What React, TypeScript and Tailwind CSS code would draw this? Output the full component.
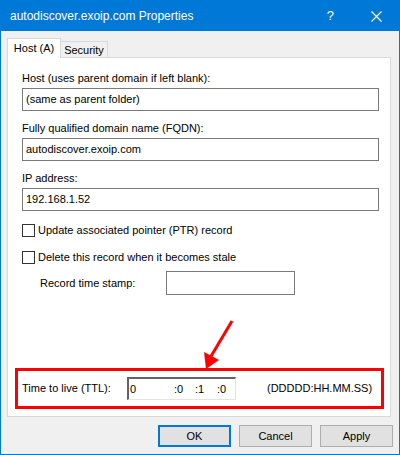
import React from "react";

const font = { fontFamily: '"Liberation Sans", Arial, sans-serif' };

function Field({ label, value }: { label: string; value: string }) {
  return (
    <div className="mb-[10px]">
      <div className="h-[14px] leading-[14px]">{label}</div>
      <div className="mt-[3px] h-[23px] w-[357px] border border-[#7a7a7a] bg-white px-[3px] leading-[21px]">
        {value}
      </div>
    </div>
  );
}

function Check({ label }: { label: string }) {
  return (
    <div className="flex h-[13px] items-center">
      <div className="h-[13px] w-[13px] border border-[#333333] bg-white" />
      <span className="ml-[3px] leading-[13px]">{label}</span>
    </div>
  );
}

export default function App() {
  return (
    <div
      className="flex h-[455px] w-[400px] flex-col border border-[#0078d7] bg-[#f0f0f0] text-[11px] text-black"
      style={font}
    >
      {/* title bar */}
      <div className="flex h-[30px] items-center bg-[#0078d7] text-white">
        <span className="ml-[9px] text-[12px]">autodiscover.exoip.com Properties</span>
        <span className="ml-auto mr-[37px] text-[13px]">?</span>
        <svg width="11" height="11" viewBox="0 0 11 11" className="mr-[17px]">
          <path d="M0.5 0.5 L10.5 10.5 M10.5 0.5 L0.5 10.5" stroke="white" strokeWidth="1.1" />
        </svg>
      </div>

      {/* tabs */}
      <div className="ml-[6px] mt-[6px] flex h-[20px] items-end">
        <div className="relative z-10 -mb-px flex h-[20px] w-[54px] items-center justify-center border border-b-0 border-[#d9d9d9] bg-white pb-[1px]">
          Host (A)
        </div>
        <div className="flex h-[16px] w-[47px] items-center justify-center border border-l-0 border-b-0 border-[#d9d9d9] bg-[#f0f0f0] pt-[1px]">
          Security
        </div>
      </div>

      {/* panel */}
      <div className="ml-[6px] h-[360px] w-[384px] border border-[#d9d9d9] bg-white">
        <div className="pl-[14px] pt-[13px]">
          <Field label="Host (uses parent domain if left blank):" value="(same as parent folder)" />
          <Field label="Fully qualified domain name (FQDN):" value="autodiscover.exoip.com" />
          <Field label="IP address:" value="192.168.1.52" />
          <div className="mt-[13px]">
            <Check label="Update associated pointer (PTR) record" />
          </div>
          <div className="mt-[14px]">
            <Check label="Delete this record when it becomes stale" />
          </div>
          <div className="mt-[7px] flex items-center">
            <span className="ml-[18px] w-[126px]">Record time stamp:</span>
            <div className="h-[24px] w-[129px] border border-[#7a7a7a] bg-white" />
          </div>
        </div>

        {/* TTL row, annotated */}
        <div className="relative ml-[7px] mt-[73px] flex h-[41px] w-[369px] items-center border-[3px] border-[#ff0000] pl-[4px]">
          <span className="w-[105px]">Time to live (TTL):</span>
          <div className="flex h-[23px] w-[109px] items-center border-l-2 border-t-2 border-r border-b border-l-[#646464] border-t-[#646464] border-r-[#e3e3e3] border-b-[#e3e3e3] bg-white">
            <span className="ml-[1px] w-[44px]">0</span>
            <span className="w-[21px]">:0</span>
            <span className="w-[22px]">:1</span>
            <span>:0</span>
          </div>
          <span className="ml-[31px]">(DDDDD:HH.MM.SS)</span>
          <svg
            width="40"
            height="60"
            viewBox="0 0 40 60"
            className="absolute left-[178px] top-[-55px] overflow-visible"
          >
            <path d="M36 5 L14 42" stroke="#ff0000" strokeWidth="3" />
            <path d="M10 53 L8 36 L23 44 Z" fill="#ff0000" />
          </svg>
        </div>
      </div>

      {/* buttons */}
      <div className="mr-[6px] mt-[8px] flex justify-end gap-[8px]">
        <button className="h-[22px] w-[73px] border-2 border-[#0078d7] bg-[#e1e1e1]">OK</button>
        <button className="h-[22px] w-[73px] border border-[#adadad] bg-[#e1e1e1]">Cancel</button>
        <button className="h-[22px] w-[73px] border border-[#adadad] bg-[#e1e1e1]">Apply</button>
      </div>
    </div>
  );
}
